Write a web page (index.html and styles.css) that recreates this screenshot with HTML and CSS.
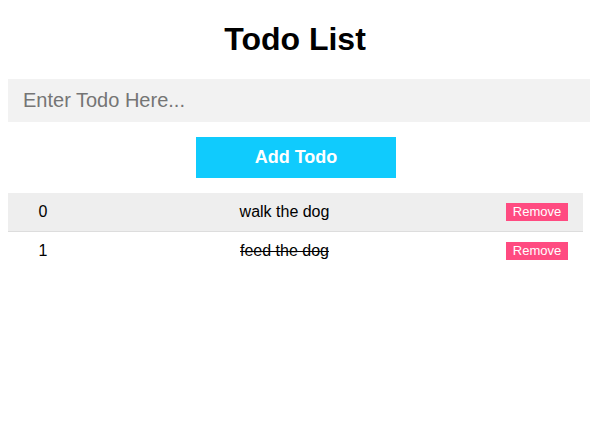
FILE: index.html
```html
<!DOCTYPE html>
<html lang="en">
<head>
<meta charset="utf-8">
<title>Todo List</title>
<link rel="stylesheet" href="styles.css">
</head>
<body>
  <h1 class="title">Todo List</h1>
  <input class="todo-input" type="text" placeholder="Enter Todo Here...">
  <div class="add-wrap">
    <button class="add-btn">Add Todo</button>
  </div>
  <div class="todo-list">
    <div class="todo-row shaded">
      <span class="todo-index">0</span>
      <span class="todo-text">walk the dog</span>
      <span class="todo-action"><button class="remove-btn">Remove</button></span>
    </div>
    <div class="todo-row">
      <span class="todo-index">1</span>
      <span class="todo-text done">feed the dog</span>
      <span class="todo-action"><button class="remove-btn">Remove</button></span>
    </div>
  </div>
</body>
</html>
```

FILE: styles.css
```css
html {
  background: #ffffff;
}
body {
  margin: 0;
  padding: 0 8px 8px;
  font-family: "Liberation Sans", Arial, sans-serif;
  color: #000;
  overflow: hidden;
}
.title {
  font-size: 32px;
  font-weight: bold;
  text-align: center;
  margin: 21px 0;
  line-height: 37px;
}
.todo-input {
  display: block;
  box-sizing: border-box;
  width: calc(100% + 8px);
  margin: 0;
  border: none;
  outline: none;
  background: #f2f2f2;
  font-family: "Liberation Sans", Arial, sans-serif;
  font-size: 20px;
  line-height: 23px;
  height: 43px;
  padding: 10px 15px;
  color: #000;
}
.todo-input::placeholder {
  color: #757575;
}
.add-wrap {
  display: flex;
  justify-content: center;
  margin-top: 15px;
  padding-left: 2px;
}
.add-btn {
  width: 200px;
  height: 41px;
  border: none;
  background: #10cbfd;
  color: #fff;
  font-family: "Liberation Sans", Arial, sans-serif;
  font-weight: bold;
  font-size: 18px;
  padding: 0;
  margin: 0;
}
.todo-list {
  margin-top: 15px;
  width: 575px;
}
.todo-row {
  display: grid;
  grid-template-columns: 70px 1fr 92px;
  align-items: center;
  height: 38px;
  font-size: 16px;
  text-align: center;
}
.todo-row.shaded {
  background: #eeeeee;
  border-bottom: 1px solid #dddddd;
}
.done {
  text-decoration: line-through;
}
.todo-action {
  display: flex;
  justify-content: center;
}
.remove-btn {
  border: none;
  background: #ff4b81;
  color: #fff;
  font-family: "Liberation Sans", Arial, sans-serif;
  font-size: 13px;
  line-height: 16px;
  padding: 1px 7px;
  margin: 0;
}
```
